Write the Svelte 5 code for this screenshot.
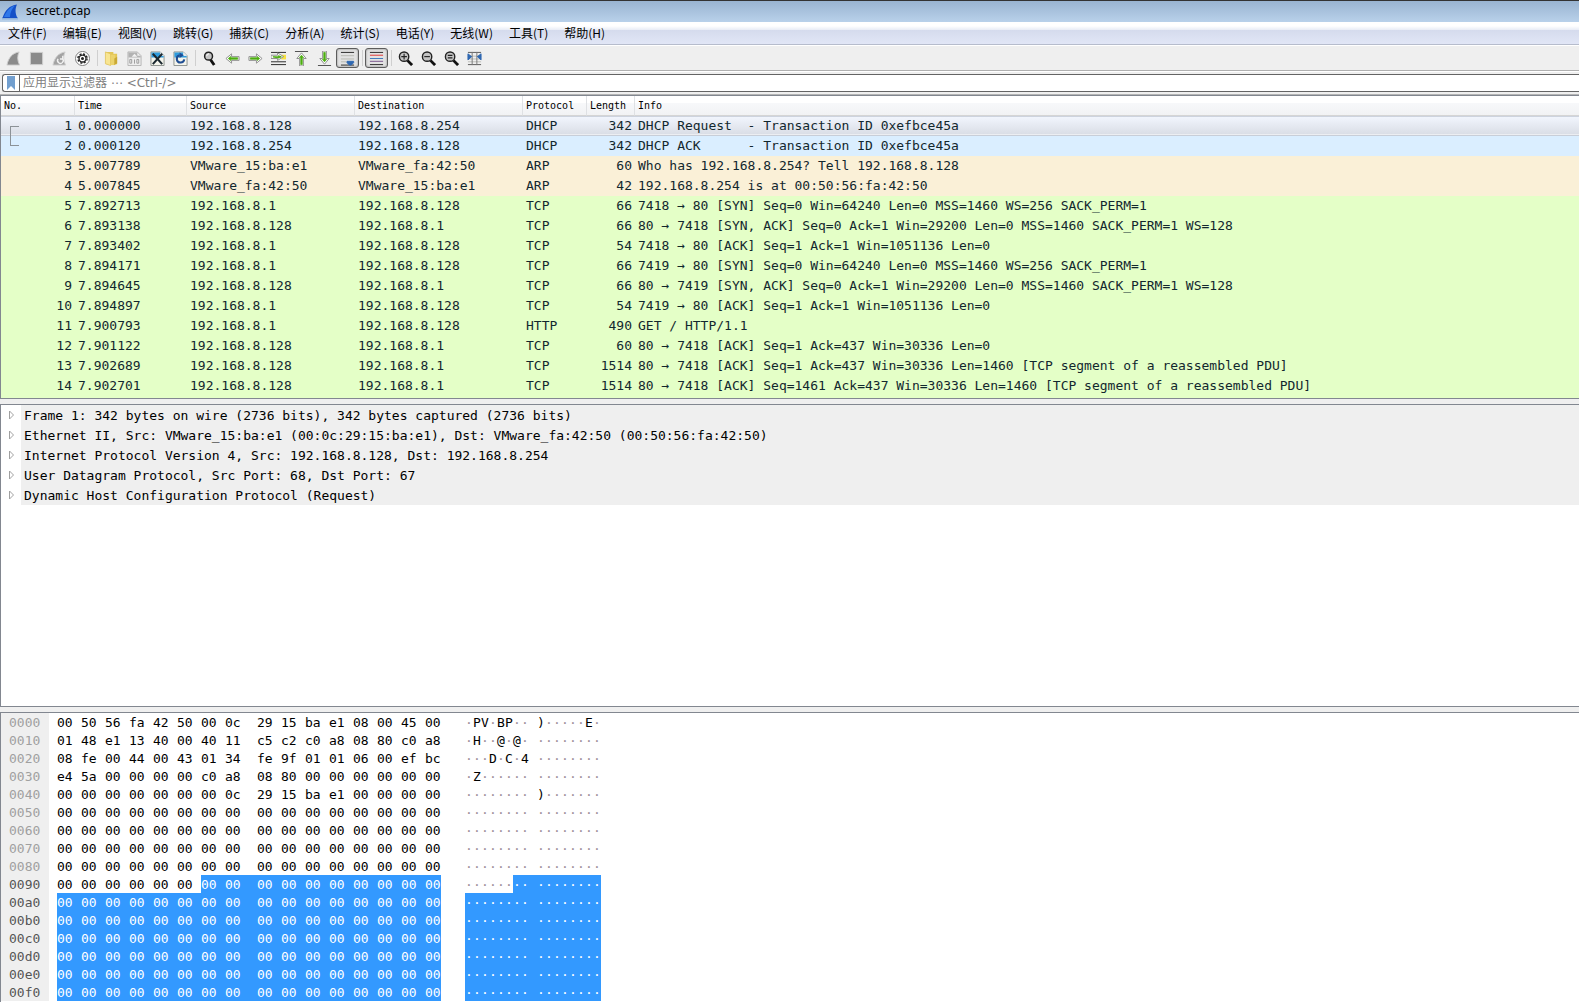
<script lang="ts">
	type Packet = {
		no: number;
		time: string;
		source: string;
		destination: string;
		protocol: string;
		length: number;
		info: string;
	};

	const menus = [
		'文件(F)',
		'编辑(E)',
		'视图(V)',
		'跳转(G)',
		'捕获(C)',
		'分析(A)',
		'统计(S)',
		'电话(Y)',
		'无线(W)',
		'工具(T)',
		'帮助(H)'
	];

	const toolGroups = [
		['start', 'stop', 'restart', 'options'],
		['open', 'save', 'close', 'reload'],
		['find', 'back', 'forward', 'goto', 'first', 'last', 'autoscroll'],
		['colorize'],
		['zoom-in', 'zoom-out', 'zoom-normal', 'resize']
	];

	const host = '192.168.8.1';
	const server = '192.168.8.128';
	const vm15 = 'VMware_15:ba:e1';
	const vmfa = 'VMware_fa:42:50';

	const rows: [string, string, string, string, number, string][] = [
		['0.000000', server, '192.168.8.254', 'DHCP', 342, 'DHCP Request  - Transaction ID 0xefbce45a'],
		['0.000120', '192.168.8.254', server, 'DHCP', 342, 'DHCP ACK      - Transaction ID 0xefbce45a'],
		['5.007789', vm15, vmfa, 'ARP', 60, 'Who has 192.168.8.254? Tell 192.168.8.128'],
		['5.007845', vmfa, vm15, 'ARP', 42, '192.168.8.254 is at 00:50:56:fa:42:50'],
		['7.892713', host, server, 'TCP', 66, '7418 → 80 [SYN] Seq=0 Win=64240 Len=0 MSS=1460 WS=256 SACK_PERM=1'],
		['7.893138', server, host, 'TCP', 66, '80 → 7418 [SYN, ACK] Seq=0 Ack=1 Win=29200 Len=0 MSS=1460 SACK_PERM=1 WS=128'],
		['7.893402', host, server, 'TCP', 54, '7418 → 80 [ACK] Seq=1 Ack=1 Win=1051136 Len=0'],
		['7.894171', host, server, 'TCP', 66, '7419 → 80 [SYN] Seq=0 Win=64240 Len=0 MSS=1460 WS=256 SACK_PERM=1'],
		['7.894645', server, host, 'TCP', 66, '80 → 7419 [SYN, ACK] Seq=0 Ack=1 Win=29200 Len=0 MSS=1460 SACK_PERM=1 WS=128'],
		['7.894897', host, server, 'TCP', 54, '7419 → 80 [ACK] Seq=1 Ack=1 Win=1051136 Len=0'],
		['7.900793', host, server, 'HTTP', 490, 'GET / HTTP/1.1'],
		['7.901122', server, host, 'TCP', 60, '80 → 7418 [ACK] Seq=1 Ack=437 Win=30336 Len=0'],
		['7.902689', server, host, 'TCP', 1514, '80 → 7418 [ACK] Seq=1 Ack=437 Win=30336 Len=1460 [TCP segment of a reassembled PDU]'],
		['7.902701', server, host, 'TCP', 1514, '80 → 7418 [ACK] Seq=1461 Ack=437 Win=30336 Len=1460 [TCP segment of a reassembled PDU]']
	];

	const packets: Packet[] = rows.map(([time, source, destination, protocol, length, info], i) => ({
		no: i + 1,
		time,
		source,
		destination,
		protocol,
		length,
		info
	}));

	const details = [
		'Frame 1: 342 bytes on wire (2736 bits), 342 bytes captured (2736 bits)',
		'Ethernet II, Src: VMware_15:ba:e1 (00:0c:29:15:ba:e1), Dst: VMware_fa:42:50 (00:50:56:fa:42:50)',
		'Internet Protocol Version 4, Src: 192.168.8.128, Dst: 192.168.8.254',
		'User Datagram Protocol, Src Port: 68, Dst Port: 67',
		'Dynamic Host Configuration Protocol (Request)'
	];

	const head = [
		'00 50 56 fa 42 50 00 0c 29 15 ba e1 08 00 45 00',
		'01 48 e1 13 40 00 40 11 c5 c2 c0 a8 08 80 c0 a8',
		'08 fe 00 44 00 43 01 34 fe 9f 01 01 06 00 ef bc',
		'e4 5a 00 00 00 00 c0 a8 08 80 00 00 00 00 00 00',
		'00 00 00 00 00 00 00 0c 29 15 ba e1 00 00 00 00'
	]
		.join(' ')
		.split(' ');
	const bytes = [...head, ...Array(256 - head.length).fill('00')];
	const dump = Array.from({ length: 16 }, (_, i) => bytes.slice(i * 16, i * 16 + 16));

	let selected = $state(1);
	let filter = $state('');
	let autoscroll = $state(true);
	let colorize = $state(true);

	/** First byte of the highlighted field. */
	const selStart = 0x96;

	function ascii(byte: string) {
		const code = parseInt(byte, 16);
		return code > 0x20 && code < 0x7f ? String.fromCharCode(code) : '·';
	}

	function pressed(tool: string) {
		return (tool === 'autoscroll' && autoscroll) || (tool === 'colorize' && colorize);
	}

	function runTool(tool: string) {
		if (tool === 'autoscroll') autoscroll = !autoscroll;
		if (tool === 'colorize') colorize = !colorize;
	}
</script>

{#snippet lens()}
	<path d="M10 10l5 5" stroke="#111" stroke-width="3" />
	<circle cx="6.5" cy="6" r="5" fill="#c4c4c4" stroke="#222" stroke-width="1.5" />
{/snippet}

{#snippet arrow()}
	<path d="M1 8l6-5v3h8v4H7v3z" fill="#fff" stroke="#8c8c8c" />
	<path d="M3.5 8L6 5.8V7.2h7.5v1.6H6v1.4z" fill="#4eae12" stroke="#4eae12" stroke-width=".8" />
{/snippet}

{#snippet page()}
	<path d="M1 1h10l4 4v10.500H1z" fill="#f4f4ec" stroke="#8b908c" />
	<path d="M1.500 1.500h9.500V5h3.500v2h-13z" fill="#2f9bdc" />
	<path d="M11 1v4h4z" fill="#e8edf0" />
{/snippet}

{#snippet icon(name: string)}
	<svg viewBox="0 0 16 16" width="16" height="16" fill="none" aria-hidden="true">
		{#if name === 'start'}
			<path d="M1 15C2.500 7 7 2 14 1c-2 4-2 9 .5 14z" fill="#8b8b8b" stroke="#d0d0d0" />
		{:else if name === 'stop'}
			<path d="M1.500 1.500h13v13h-13z" fill="#8b8b8b" stroke="#cfcfcf" />
		{:else if name === 'restart'}
			<path d="M1 15C2.500 7 7 2 14 1c-2 4-2 9 .5 14z" fill="#a3a3a3" stroke="#d0d0d0" />
			<path d="M6.500 8.500a3 3 0 1 0 4.500-.5M11.500 5v3.500H8.500" stroke="#f2f2f2" stroke-width="1.500" />
		{:else if name === 'options'}
			<circle cx="8" cy="8" r="7.500" fill="#fff" stroke="#777" />
			<circle cx="8" cy="8" r="4.900" stroke="#222" stroke-width="1.500" stroke-dasharray="2.200 1.650" />
			<circle cx="8" cy="8" r="3.700" stroke="#222" stroke-width="1.400" />
			<circle cx="8" cy="8" r="1.600" fill="#222" />
		{:else if name === 'open'}
			<path d="M2 1h8v2h4v11H2z" fill="#e3c656" />
			<path d="M1.500 1L7 3v12.500l-5.500-2z" fill="#f8e591" stroke="#dfc25a" stroke-width=".8" />
			<path d="M7 4h5v11H7z" fill="#ecd36c" />
			<path d="M11 8l3-2v7l-3 2z" fill="#c9a934" />
		{:else if name === 'save'}
			<path d="M1 1h10l4 4v10.500H1z" fill="#eee" stroke="#b4b4b4" />
			<path d="M1.500 1.500h9.500V5h3.500v2h-13z" fill="#b2b2b2" />
			<path d="M5 6l3-3 3 3" fill="#f3f3f3" />
			<path d="M3 9h2v4H3zM8 9v4.500M10.500 9h2v4h-2z" stroke="#9b9b9b" />
		{:else if name === 'close'}
			{@render page()}
			<path d="M3 3l10 11M13 3L3 14" stroke="#1b2830" stroke-width="2.200" />
		{:else if name === 'reload'}
			{@render page()}
			<path d="M7 4.500a4 4 0 1 0 5 4.500" stroke="#1f4d93" stroke-width="2.200" />
			<path d="M7 1.500l4.500 3L7 7.500z" fill="#1f4d93" />
		{:else if name === 'find'}
			<path d="M9 9l4 6" stroke="#111" stroke-width="3" />
			<circle cx="7" cy="5.500" r="4.200" fill="#c6c6c6" stroke="#222" stroke-width="1.600" />
			<path d="M5 5.500A2.500 2.500 0 0 1 7.500 3" stroke="#fff" />
		{:else if name === 'back'}
			{@render arrow()}
		{:else if name === 'forward'}
			<g transform="rotate(180 8 8)">{@render arrow()}</g>
		{:else if name === 'goto'}
			<path d="M0 1.500h16M0 11.500h16M0 14.500h16" stroke="#222" />
			<path d="M11 4h5v5h-5z" fill="#f7e13f" />
			<path d="M0 4.500h7V2l6.500 4L7 10V8H0z" fill="#fff" stroke="#8c8c8c" />
			<path d="M2 6.200h6V5l3 1.200-3 1.300z" stroke="#4eae12" fill="#4eae12" />
		{:else if name === 'first'}
			<path d="M1 .5h14" stroke="#444" />
			<g transform="translate(0 1) rotate(90 8 8)">{@render arrow()}</g>
		{:else if name === 'last'}
			<path d="M1 15.500h14" stroke="#444" />
			<g transform="translate(0 -1) rotate(-90 8 8)">{@render arrow()}</g>
		{:else if name === 'autoscroll'}
			<path d="M1 1.500h14M1 15h14" stroke="#222" />
			<path d="M1 5h14M1 8.500h14M1 11.500h6" stroke="#b5b8b0" />
			<path d="M7.500 11h7v1.500L12 15h-2l-2.500-2.500z" fill="#2f68b1" stroke="#2f68b1" />
		{:else if name === 'colorize'}
			<path d="M1 1.500h14M1 14.500h14" stroke="#222" />
			<path d="M1 4.500h14" stroke="#e03030" />
			<path d="M1 8h14" stroke="#3873ba" />
			<path d="M1 11h14" stroke="#76508a" />
		{:else if name === 'zoom-in'}
			{@render lens()}
			<path d="M3.500 6h6M6.500 3v6" stroke="#222" stroke-width="1.200" />
		{:else if name === 'zoom-out'}
			{@render lens()}
			<path d="M3.500 6h6" stroke="#222" stroke-width="1.200" />
		{:else if name === 'zoom-normal'}
			{@render lens()}
			<path d="M4 4.700h5M4 7.300h5" stroke="#222" stroke-width="1.200" />
		{:else if name === 'resize'}
			<path d="M1 1.500h14M1 14.500h14" stroke="#555" />
			<path d="M1 5.500h14M1 8.500h14M1 11.500h14" stroke="#b9bbb6" />
			<path d="M5.500 1v14M10.500 1v14" stroke="#777" />
			<path d="M1 3l4 3-4 3.500zM15 3l-4 3 4 3.500z" fill="#2f68b1" stroke="#2f68b1" />
		{/if}
	</svg>
{/snippet}

<div class="window">
	<header class="titlebar">
		<svg viewBox="0 0 16 16" width="16" height="16" aria-hidden="true">
			<path d="M0 13h16v2.500H0z" fill="#8fb2dc" />
			<path d="M.5 14C3 6 7.500 1.500 15 .5c-2 4-2 9 .5 13.500z" fill="#1450c8" />
			<path d="M2 13C4.500 7 8 3 13 1.500c-3 3-5 7-5 11.500z" fill="#2f78ea" />
		</svg>
		<h1>secret.pcap</h1>
	</header>

	<nav class="menubar">
		{#each menus as menu (menu)}
			<button type="button">{menu}</button>
		{/each}
	</nav>

	<div class="toolbar" role="toolbar">
		{#each toolGroups as group, g (g)}
			{#if g > 0}<span class="separator"></span>{/if}
			{#each group as tool (tool)}
				<button
					type="button"
					class="tool"
					class:pressed={pressed(tool)}
					aria-label={tool}
					onclick={() => runTool(tool)}
				>
					{@render icon(tool)}
				</button>
			{/each}
		{/each}
	</div>

	<div class="filterbar">
		<div class="filter">
			<button type="button" class="bookmark" aria-label="bookmark">
				<svg viewBox="0 0 8 14" width="8" height="14" aria-hidden="true">
					<path d="M0 0h8v14l-4-4-4 4z" fill="#729fcf" />
				</svg>
			</button>
			<input
				type="text"
				aria-label="display filter"
				placeholder="应用显示过滤器 ⋯ <Ctrl-/>"
				bind:value={filter}
			/>
		</div>
	</div>

	<section class="pane packets">
		<table>
			<colgroup>
				<col class="c-no" />
				<col class="c-time" />
				<col class="c-addr" />
				<col class="c-addr" />
				<col class="c-proto" />
				<col class="c-len" />
				<col />
			</colgroup>
			<thead>
				<tr>
					<th>No.</th>
					<th>Time</th>
					<th>Source</th>
					<th>Destination</th>
					<th>Protocol</th>
					<th>Length</th>
					<th>Info</th>
				</tr>
			</thead>
			<tbody>
				{#each packets as packet (packet.no)}
					<tr
						class={colorize ? packet.protocol.toLowerCase() : ''}
						class:selected={packet.no === selected}
						onclick={() => (selected = packet.no)}
					>
						<td class="num">
							{#if packet.no === 1}<span class="link-start"></span>{/if}
							{#if packet.no === 2}<span class="link-end"></span>{/if}
							{packet.no}
						</td>
						<td>{packet.time}</td>
						<td>{packet.source}</td>
						<td>{packet.destination}</td>
						<td>{packet.protocol}</td>
						<td class="num">{packet.length}</td>
						<td>{packet.info}</td>
					</tr>
				{/each}
			</tbody>
		</table>
	</section>

	<section class="pane details">
		<ul>
			{#each details as line (line)}
				<li>
					<button type="button" class="expand" aria-label="expand">
						<svg viewBox="0 0 6 10" width="6" height="10" aria-hidden="true">
							<path d="M.5 1v8l4-4z" fill="#fff" stroke="#a0a0a0" />
						</svg>
					</button>
					<span>{line}</span>
				</li>
			{/each}
		</ul>
	</section>

	<section class="pane dump">
		<table>
			<tbody>
				{#each dump as line, r (r)}
					<tr>
						<th class:active={r >= 9}>{(r * 16).toString(16).padStart(4, '0')}</th>
						<td class="space"></td>
						{#each line as byte, c (c)}
							<td class="byte" class:mid={c === 7} class:end={c === 15} class:sel={r * 16 + c >= selStart}>
								{byte}
							</td>
						{/each}
						<td class="gap"></td>
						{#each line as byte, c (c)}
							<td
								class="char"
								class:mid={c === 7}
								class:dot={ascii(byte) === '·'}
								class:sel={r * 16 + c >= selStart}>{ascii(byte)}</td
							>
						{/each}
					</tr>
				{/each}
			</tbody>
		</table>
	</section>
</div>

<style>
	:global(body) {
		margin: 0;
		background: #efefef;
	}

	.window {
		display: flex;
		flex-direction: column;
		min-height: 100vh;
		background: #efefef;
		font-family: 'Noto Sans', 'Noto Sans CJK SC', sans-serif;
		font-size: 12px;
		color: #000;
	}

	button,
	input {
		margin: 0;
		padding: 0;
		border: 0;
		background: none;
		font: inherit;
		color: inherit;
	}

	svg {
		display: block;
	}

	.titlebar {
		display: flex;
		align-items: center;
		gap: 8px;
		box-sizing: border-box;
		height: 22px;
		padding-left: 2px;
		border-top: 1px solid #333;
		background: linear-gradient(#99b4d1, #b9d1ea);
	}

	h1 {
		margin: 0;
		padding-bottom: 2px;
		font-size: 12px;
		font-weight: 400;
		line-height: 16px;
	}

	.menubar {
		display: flex;
		height: 22px;
		border-bottom: 1px solid #b6bccc;
		background: linear-gradient(#fff, #fff 4px, #e8ecf6 8px, #d5dbed 8px, #e1e6f6);
	}

	.menubar button {
		padding: 0 8px;
		font-family: 'Noto Sans CJK SC', sans-serif;
		line-height: 22px;
	}

	.toolbar {
		display: flex;
		align-items: center;
		height: 24px;
		padding-left: 2px;
		border-top: 1px solid #fff;
		border-bottom: 1px solid #b0b0b0;
	}

	.tool {
		display: flex;
		align-items: center;
		justify-content: center;
		box-sizing: border-box;
		width: 23px;
		height: 20px;
	}

	.tool svg {
		width: 15px;
		height: 15px;
	}

	.pressed {
		border: 1px solid #5c5c5c;
		border-radius: 3px;
		background: #e2e2e2;
		box-shadow: inset 0 0 2px #777;
	}

	.separator {
		box-sizing: border-box;
		width: 4px;
		height: 16px;
		margin-right: 2px;
		border-right: 1px solid #cfcfcf;
	}

	.filterbar {
		padding: 2px 0 2px 2px;
		border-top: 1px solid #fff;
		border-bottom: 1px solid #b4b4b4;
	}

	.filter {
		display: flex;
		height: 16px;
		border: 1px solid #646464;
		border-right: 0;
		border-radius: 3px 0 0 3px;
		background: #fff;
	}

	.bookmark {
		display: flex;
		align-items: center;
		justify-content: center;
		width: 17px;
		border-right: 1px solid #646464;
	}

	.filter input {
		flex: 1;
		min-width: 0;
		padding: 0 0 1px 3px;
		outline: none;
		font-family: 'DejaVu Sans', 'Noto Sans CJK SC', sans-serif;
	}

	.filter input::placeholder {
		color: #808080;
		opacity: 1;
	}

	.pane {
		border-top: 1px solid #828790;
		border-left: 1px solid #828790;
		background: #fff;
		font-family: Consolas, 'DejaVu Sans Mono', monospace;
		font-size: 13px;
	}

	table {
		border-collapse: separate;
		border-spacing: 0;
		table-layout: fixed;
	}

	th,
	td {
		box-sizing: border-box;
		padding: 0;
		text-align: left;
		font-weight: 400;
		white-space: pre;
	}

	.packets {
		padding-bottom: 2px;
		border-bottom: 1px solid #828790;
		background: #e4ffc7;
		color: #12272e;
	}

	.packets table {
		width: 100%;
	}

	.c-no {
		width: 74px;
	}

	.c-time {
		width: 112px;
	}

	.c-addr {
		width: 168px;
	}

	.c-proto {
		width: 64px;
	}

	.c-len {
		width: 48px;
	}

	thead th {
		height: 20px;
		padding: 2px 0 1px 3px;
		border-right: 1px solid #dfe1e4;
		border-bottom: 1px solid #d5d5d5;
		background: linear-gradient(#fff 7px, #f7f8fa 7px, #f1f2f4);
		font-size: 10px;
		line-height: 16px;
		color: #000;
	}

	thead th:last-child {
		border-right: 0;
	}

	tbody td {
		height: 20px;
		line-height: 20px;
	}

	.packets td {
		position: relative;
		padding-left: 3px;
	}

	.packets .num {
		padding-right: 3px;
		text-align: right;
		white-space: nowrap;
	}

	.dhcp {
		background: #daeeff;
	}

	.arp {
		background: #faf0d7;
	}

	.tcp,
	.http {
		background: #e4ffc7;
	}

	.selected td {
		background: linear-gradient(#cdd3de 1px, #f1f5fd 1px, #dadee6 18px, #eceef2 18px, #eceef2 19px, #c8ced8 19px);
	}

	.link-start,
	.link-end {
		position: absolute;
		left: 9px;
		width: 8px;
		height: 9px;
		border-left: 1px solid #8c9297;
	}

	.link-start {
		bottom: 0;
		border-top: 1px solid #8c9297;
	}

	.link-end {
		top: 0;
		border-bottom: 1px solid #8c9297;
	}

	.details {
		flex: 1;
		margin: 5px 0;
		border-bottom: 1px solid #828790;
	}

	ul {
		margin: 0;
		padding: 0;
		list-style: none;
	}

	li {
		display: flex;
		height: 20px;
		line-height: 22px;
	}

	.expand {
		display: flex;
		align-items: center;
		width: 20px;
		padding-left: 8px;
	}

	.expand + span {
		flex: 1;
		padding-left: 3px;
		background: #efefef;
		white-space: pre;
	}

	.dump {
		padding-bottom: 1px;
	}

	.dump th,
	.dump td {
		height: 18px;
		padding-top: 2px;
		line-height: 16px;
	}

	.dump th {
		width: 48px;
		padding-left: 8px;
		background: #efefef;
		color: #a0a0a0;
	}

	.dump th.active {
		color: #555;
	}

	.dump .space {
		width: 8px;
	}

	.dump .gap {
		width: 24px;
	}

	.dump table {
		width: 600px;
	}

	.byte {
		width: 24px;
		white-space: nowrap;
	}

	.byte.mid {
		width: 32px;
	}

	.byte.end {
		width: 16px;
	}

	.char {
		width: 8px;
	}

	.char.mid {
		width: 16px;
	}

	.dot {
		color: #a0909a;
	}

	.sel {
		background: #3399ff;
		color: #fff;
	}
</style>
